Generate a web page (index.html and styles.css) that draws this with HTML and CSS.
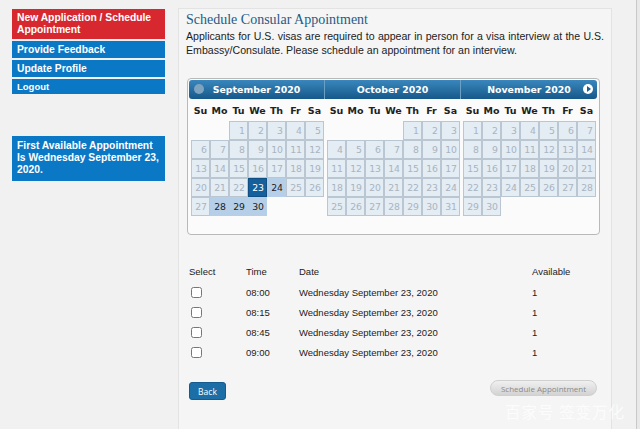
FILE: index.html
```html
<html>
<head>
<meta charset="UTF-8">
<meta name="viewport" content="width=device-width, initial-scale=1.0">
<title>Schedule Consular Appointment</title>
<link rel="stylesheet" href="styles.css">
</head>
<body>
<div class="page">
  <div class="sidebar">
    <div class="nav">
      <a class="nav-item active" href="#">New Application / Schedule Appointment</a>
      <a class="nav-item" href="#">Provide Feedback</a>
      <a class="nav-item" href="#">Update Profile</a>
      <a class="nav-item small" href="#">Logout</a>
    </div>
    <div class="first-available">First Available Appointment Is Wednesday September 23, 2020.</div>
  </div>

  <div class="main">
    <h1>Schedule Consular Appointment</h1>
    <p class="intro">Applicants for U.S. visas are required to appear in person for a visa interview at the U.S. Embassy/Consulate. Please schedule an appointment for an interview.</p>

    <div class="datepicker">
      <div class="dp-months" id="months"></div>
    </div>

    <table class="slots">
      <tr>
        <th class="c-select">Select</th>
        <th class="c-time">Time</th>
        <th class="c-date">Date</th>
        <th>Available</th>
      </tr>
      <tr><td><input type="checkbox"></td><td>08:00</td><td>Wednesday September 23, 2020</td><td>1</td></tr>
      <tr><td><input type="checkbox"></td><td>08:15</td><td>Wednesday September 23, 2020</td><td>1</td></tr>
      <tr><td><input type="checkbox"></td><td>08:45</td><td>Wednesday September 23, 2020</td><td>1</td></tr>
      <tr><td><input type="checkbox"></td><td>09:00</td><td>Wednesday September 23, 2020</td><td>1</td></tr>
    </table>

    <div class="actions">
      <button class="btn-back">Back</button>
      <button class="btn-schedule">Schedule Appointment</button>
    </div>
  </div>
</div>
<div class="watermark">百家号 签变万化</div>

<script>
  const months = [
    { name: 'September 2020', year: 2020, month: 8 },
    { name: 'October 2020', year: 2020, month: 9 },
    { name: 'November 2020', year: 2020, month: 10 }
  ];
  const available = { '8-24': 1, '8-28': 1, '8-29': 1, '8-30': 1 };
  const selected = '8-23';
  const container = document.getElementById('months');

  months.forEach((m, index) => {
    const group = document.createElement('div');
    group.classList.add('dp-group');

    let title = '<div class="dp-header">';
    if (index === 0) title += '<span class="dp-prev"></span>';
    if (index === 2) title += '<span class="dp-next"></span>';
    title += m.name + '</div>';

    let html = title + '<table class="dp-table"><tr>';
    ['Su', 'Mo', 'Tu', 'We', 'Th', 'Fr', 'Sa'].forEach(d => html += `<th>${d}</th>`);
    html += '</tr>';

    const first = new Date(m.year, m.month, 1).getDay();
    const days = new Date(m.year, m.month + 1, 0).getDate();
    let day = 1;
    for (let week = 0; day <= days; week++) {
      html += '<tr>';
      for (let wd = 0; wd < 7; wd++) {
        if ((week === 0 && wd < first) || day > days) {
          html += '<td></td>';
        } else {
          const key = m.month + '-' + day;
          let cls = 'dp-day';
          if (key === selected) cls += ' is-selected';
          else if (available[key]) cls += ' is-open';
          html += `<td><span class="${cls}">${day}</span></td>`;
          day++;
        }
      }
      html += '</tr>';
    }
    html += '</table>';
    group.innerHTML = html;
    container.appendChild(group);
  });
</script>
</body>
</html>
```

FILE: styles.css
```css
body {
  margin: 0;
  padding: 0;
  background-color: #e9e9e9;
  font-family: "Liberation Sans", Arial, sans-serif;
}

.page {
  display: flex;
  width: 636px;
  height: 429px;
  background-color: #f1f1f1;
  border-right: 1px solid #c9c9c9;
  overflow: hidden;
}

.sidebar {
  width: 153px;
  margin: 9px 0 0 12px;
}

.nav {
  display: flex;
  flex-direction: column;
  gap: 2px;
}

.nav-item {
  display: block;
  background-color: #0b78c6;
  color: #fff;
  font-weight: bold;
  font-size: 10.3px;
  line-height: 12px;
  padding: 3px 4px 2px 5px;
  text-decoration: none;
}

.nav-item.active {
  background-color: #d6282e;
  padding: 3px 4px 3px 5px;
}

.nav-item.small {
  font-size: 9.5px;
  padding: 2px 5px 1px;
}

.first-available {
  margin-top: 42px;
  background-color: #0b78c6;
  color: #fff;
  font-weight: bold;
  font-size: 10.3px;
  line-height: 12px;
  padding: 4px 4px 5px 5px;
}

.main {
  width: 418px;
  margin: 8px 0 0 13px;
  padding: 0 7px;
  background-color: #f5f5f5;
  border: 1px solid #e3e3e3;
  border-bottom: none;
}

h1 {
  font-family: "Liberation Serif", "Times New Roman", serif;
  font-weight: normal;
  font-size: 14px;
  color: #275a86;
  margin: 3px 0 1px;
}

.intro {
  font-size: 10.6px;
  line-height: 14px;
  color: #222;
  text-align: justify;
  margin: 0 0 21px;
}

.datepicker {
  width: 411px;
  margin-left: 1px;
  background-color: #fbfbfb;
  border: 1px solid #b9b9b9;
  border-radius: 4px;
  padding: 0 0 18px;
}

.dp-months {
  display: flex;
}

.dp-group {
  width: 136px;
}

.dp-header {
  position: relative;
  height: 19px;
  line-height: 19px;
  margin-top: 1px;
  background: linear-gradient(#3987bd, #17588a);
  border-left: 1px solid #6a9fc6;
  color: #fff;
  font-family: "DejaVu Sans", Verdana, sans-serif;
  font-weight: bold;
  font-size: 9.4px;
  text-align: center;
}

.dp-group:first-child .dp-header {
  border-left: none;
  margin-left: 1px;
  border-radius: 3px 0 0 3px;
}

.dp-group:last-child .dp-header {
  border-radius: 0 3px 3px 0;
  margin-right: -1px;
}

.dp-prev,
.dp-next {
  position: absolute;
  top: 4px;
  width: 10px;
  height: 10px;
  border-radius: 50%;
}

.dp-prev {
  left: 5px;
  background-color: #7ea3bf;
}

.dp-next {
  right: 4px;
  background-color: #fff;
}

.dp-next::after {
  content: "";
  position: absolute;
  left: 4px;
  top: 2px;
  border-left: 4px solid #1d5f92;
  border-top: 3px solid transparent;
  border-bottom: 3px solid transparent;
}

.dp-table {
  border-collapse: separate;
  border-spacing: 0;
  margin-left: 3px;
}

.dp-table th {
  font-family: "DejaVu Sans", Verdana, sans-serif;
  font-size: 9.5px;
  font-weight: bold;
  color: #222;
  height: 22px;
  padding: 0;
  width: 19px;
}

.dp-table td {
  width: 19px;
  height: 19px;
  padding: 0;
}

.dp-day {
  display: block;
  height: 17px;
  line-height: 17px;
  border: 1px solid #bac7d3;
  background-color: #e4ecf4;
  color: #a9b4bf;
  font-family: "DejaVu Sans", Verdana, sans-serif;
  font-size: 9.3px;
  text-align: right;
  padding-right: 2px;
}

.dp-day.is-open {
  background-color: #b6cfe8;
  border-color: #b6cfe8;
  color: #1c1c1c;
}

.dp-day.is-selected {
  background-color: #155f9c;
  border-color: #0f4f83;
  color: #fff;
}

.slots {
  margin-top: 31px;
  border-collapse: collapse;
  font-size: 9.5px;
  color: #222;
}

.slots th {
  font-weight: normal;
  text-align: left;
  padding: 0 0 5px 3px;
  height: 16px;
}

.slots td {
  height: 20px;
  padding: 0 0 0 3px;
}

.c-select {
  width: 54px;
}

.c-time {
  width: 50px;
}

.c-date {
  width: 230px;
}

.slots input {
  width: 11px;
  height: 11px;
  margin: 0 0 0 2px;
  vertical-align: middle;
}

.actions {
  display: flex;
  justify-content: space-between;
  align-items: flex-start;
  margin-top: 18px;
  padding: 0 7px 0 3px;
}

.btn-back {
  margin-top: 2px;
  width: 37px;
  height: 18px;
  background-color: #1c6ea6;
  border: 1px solid #155b8b;
  border-radius: 3px;
  color: #fff;
  font-family: "Open Sans", sans-serif;
  font-size: 8.5px;
  padding: 0;
}

.btn-schedule {
  width: 107px;
  height: 16px;
  background: linear-gradient(#f0f0f0, #d3d3d3);
  border: 1px solid #d0d0d0;
  border-radius: 8px;
  color: #8a8a8a;
  font-family: "Open Sans", sans-serif;
  font-size: 8px;
  padding: 0;
}

.watermark {
  position: absolute;
  left: 505px;
  top: 400px;
  font-family: "Noto Sans CJK SC", sans-serif;
  font-size: 15.5px;
  letter-spacing: 1px;
  color: rgba(255, 255, 255, 0.75);
}
```
